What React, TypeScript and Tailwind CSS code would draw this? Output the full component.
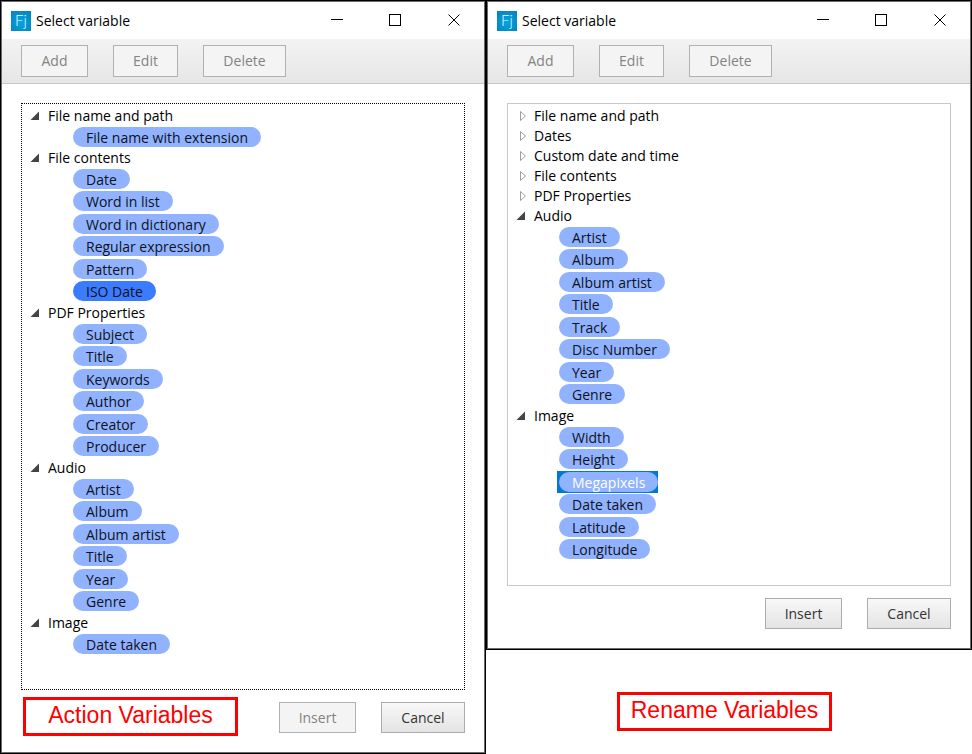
import { useState } from "react";
import type { ReactNode } from "react";
import clsx from "clsx";

type Group = { name: string; items?: string[] };

const actionGroups: Group[] = [
  { name: "File name and path", items: ["File name with extension"] },
  {
    name: "File contents",
    items: ["Date", "Word in list", "Word in dictionary", "Regular expression", "Pattern", "ISO Date"],
  },
  { name: "PDF Properties", items: ["Subject", "Title", "Keywords", "Author", "Creator", "Producer"] },
  { name: "Audio", items: ["Artist", "Album", "Album artist", "Title", "Year", "Genre"] },
  { name: "Image", items: ["Date taken"] },
];

const renameGroups: Group[] = [
  { name: "File name and path" },
  { name: "Dates" },
  { name: "Custom date and time" },
  { name: "File contents" },
  { name: "PDF Properties" },
  {
    name: "Audio",
    items: ["Artist", "Album", "Album artist", "Title", "Track", "Disc Number", "Year", "Genre"],
  },
  { name: "Image", items: ["Width", "Height", "Megapixels", "Date taken", "Latitude", "Longitude"] },
];

function AppIcon() {
  return (
    <svg width="20" height="20" viewBox="0 0 20 20" aria-hidden="true">
      <defs>
        <radialGradient id="tile" cx="0.5" cy="0.55" r="0.7">
          <stop offset="0" stopColor="#00a6e6" />
          <stop offset="1" stopColor="#0783b8" />
        </radialGradient>
      </defs>
      <rect width="20" height="20" fill="url(#tile)" />
      <text x="4" y="15" fontSize="15" fontWeight="300" fill="#f2fbff" fontFamily="Lato, sans-serif">
        Fj
      </text>
    </svg>
  );
}

function CaptionButton({ label, children }: { label: string; children: ReactNode }) {
  return (
    <button type="button" aria-label={label} className="flex w-[59px] items-center justify-center">
      <svg width="13" height="13" viewBox="0 0 13 13" fill="none" stroke="#000" aria-hidden="true">
        {children}
      </svg>
    </button>
  );
}

function PushButton({ label, className, disabled }: { label: string; className: string; disabled?: boolean }) {
  return (
    <button
      type="button"
      disabled={disabled}
      className={clsx(
        "border",
        disabled
          ? "border-[#adb2b5] bg-[#f4f4f4] text-[#838383]"
          : "border-[#acacac] bg-linear-to-b from-[#f8f8f8] to-[#e4e4e4] text-[#333]",
        className,
      )}
    >
      {label}
    </button>
  );
}

function TreeGroup({ group, current, selected }: { group: Group; current?: string; selected?: string }) {
  const [open, setOpen] = useState(Boolean(group.items));
  return (
    <li>
      <button
        type="button"
        aria-expanded={open}
        onClick={() => setOpen(!open)}
        className="flex h-5 items-center gap-2 pl-2 text-black"
      >
        <svg width="10" height="12" viewBox="0 0 10 12" aria-hidden="true">
          {open ? (
            <path d="M9 1.5v8.5h-8.5z" fill="#444" />
          ) : (
            <path d="M5.5 1.5l5 4.5-5 4.5z" transform="translate(-1 0)" fill="#fff" stroke="#a0a0a0" />
          )}
        </svg>
        {group.name}
      </button>
      {open && group.items && (
        <ul className="pl-[49px]">
          {group.items.map((item) => (
            <li key={item} className="flex odd:h-[22px] even:h-[23px]">
              <button
                type="button"
                className={clsx("flex items-start pt-px pl-0.5", item === selected && "bg-[#0078d7]")}
              >
                <span
                  className={clsx(
                    "h-5 rounded-full px-[13px] leading-[22px]",
                    item === current ? "bg-[#3b7bff]" : "bg-[#91b3ff]",
                    item === selected ? "text-white" : "text-[#0d1220]",
                  )}
                >
                  {item}
                </span>
              </button>
            </li>
          ))}
        </ul>
      )}
    </li>
  );
}

type DialogProps = {
  groups: Group[];
  current?: string;
  selected?: string;
  focused?: boolean;
  insertDisabled?: boolean;
  className: string;
};

function VariableDialog({ groups, current, selected, focused, insertDisabled, className }: DialogProps) {
  return (
    <section className={clsx("border border-black", className)}>
      <div className="flex flex-1 flex-col border border-[#6b6b6b] bg-white">
        <header className="flex h-[37px] items-stretch justify-between pl-[9px]">
          <div className="flex items-center gap-[5px]">
            <AppIcon />
            <h1 className="text-black">Select variable</h1>
          </div>
          <div className="flex">
            <CaptionButton label="Minimize">
              <path d="M1 5.5h12" />
            </CaptionButton>
            <CaptionButton label="Maximize">
              <rect x="0.5" y="0.5" width="11" height="11" />
            </CaptionButton>
            <CaptionButton label="Close">
              <path d="M0.5 0.5l11 11M11.5 0.5l-11 11" />
            </CaptionButton>
          </div>
        </header>
        <div className="flex h-[45px] items-center gap-[25px] border-b border-[#c6c6c6] bg-linear-to-b from-[#f3f3f3] to-[#e6e6e6] px-[19px]">
          <PushButton label="Add" disabled className="h-8 w-[67px]" />
          <PushButton label="Edit" disabled className="h-8 w-[65px]" />
          <PushButton label="Delete" disabled className="h-8 w-[83px]" />
        </div>
        <div className="flex flex-1 flex-col gap-3 p-[19px]">
          <ul
            className={clsx(
              "flex-1 border pt-0.5",
              focused ? "border-dotted border-black" : "border-[#c8c8c8]",
            )}
          >
            {groups.map((group) => (
              <TreeGroup key={group.name} group={group} current={current} selected={selected} />
            ))}
          </ul>
          <div className="flex justify-end gap-[25px]">
            <PushButton label="Insert" disabled={insertDisabled} className="h-[31px] w-[77px]" />
            <PushButton label="Cancel" className="h-[31px] w-[84px]" />
          </div>
        </div>
      </div>
    </section>
  );
}

function Caption({ text, className }: { text: string; className: string }) {
  return (
    <p
      className={clsx(
        "h-[39px] w-[215px] border-3 border-[#ff0000] bg-white text-center font-['Liberation_Sans',Arial,sans-serif] text-[23px] leading-[30px] text-[#ff0000]",
        className,
      )}
    >
      {text}
    </p>
  );
}

export default function App() {
  return (
    <main className="grid min-h-screen grid-cols-2 bg-white font-['Open_Sans',sans-serif] text-sm">
      <div className="relative flex flex-col">
        <VariableDialog
          groups={actionGroups}
          current="ISO Date"
          focused
          insertDisabled
          className="flex flex-1"
        />
        <Caption text="Action Variables" className="absolute bottom-[18px] left-[23px]" />
      </div>
      <div className="flex flex-col">
        <VariableDialog groups={renameGroups} selected="Megapixels" className="flex min-h-[650px]" />
        <Caption text="Rename Variables" className="mt-[42px] ml-[131px]" />
      </div>
    </main>
  );
}
